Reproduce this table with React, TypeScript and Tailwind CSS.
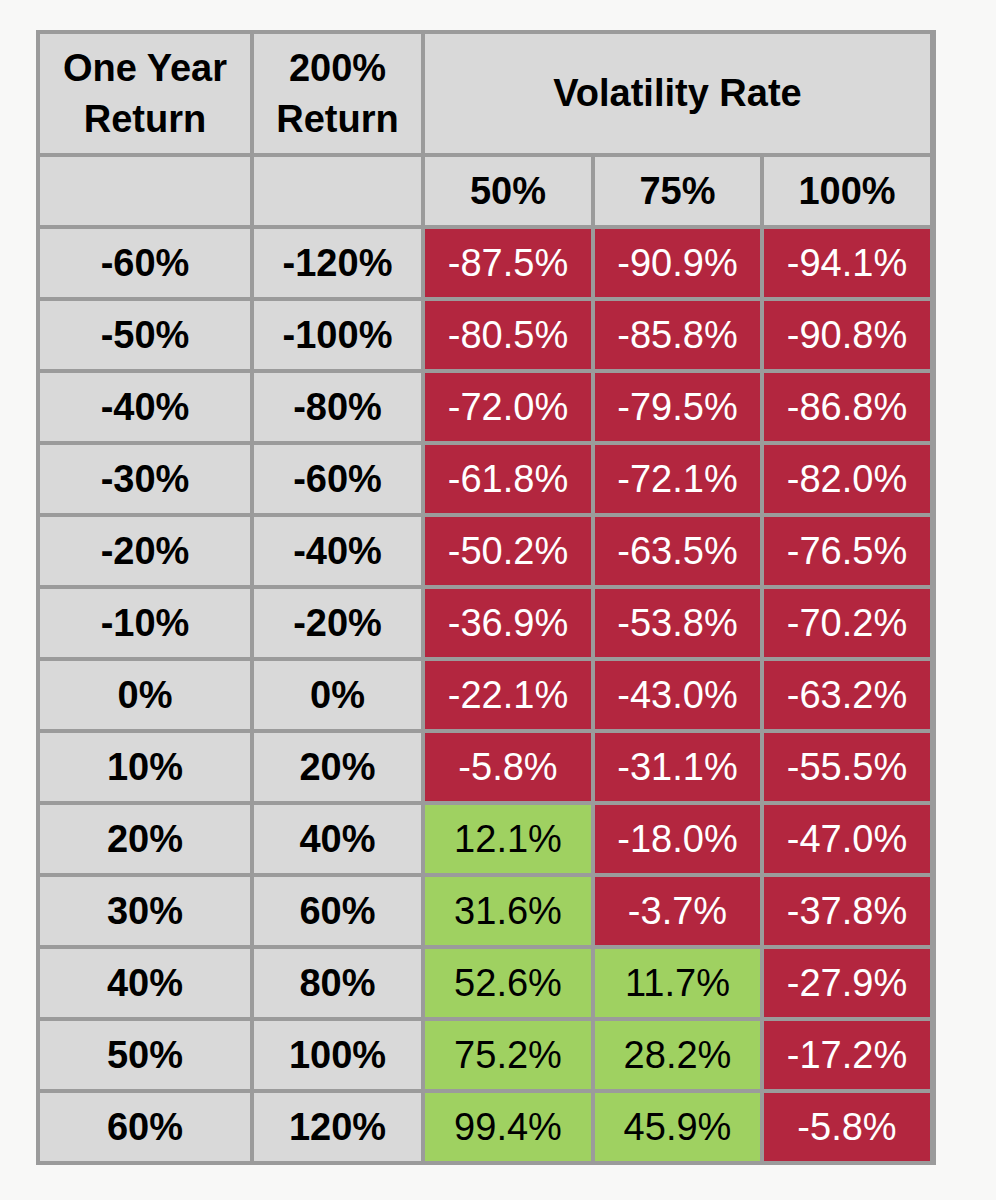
const rows: [string, string, number, number, number][] = [
    ['-60%', '-120%', -87.5, -90.9, -94.1],
    ['-50%', '-100%', -80.5, -85.8, -90.8],
    ['-40%', '-80%', -72.0, -79.5, -86.8],
    ['-30%', '-60%', -61.8, -72.1, -82.0],
    ['-20%', '-40%', -50.2, -63.5, -76.5],
    ['-10%', '-20%', -36.9, -53.8, -70.2],
    ['0%', '0%', -22.1, -43.0, -63.2],
    ['10%', '20%', -5.8, -31.1, -55.5],
    ['20%', '40%', 12.1, -18.0, -47.0],
    ['30%', '60%', 31.6, -3.7, -37.8],
    ['40%', '80%', 52.6, 11.7, -27.9],
    ['50%', '100%', 75.2, 28.2, -17.2],
    ['60%', '120%', 99.4, 45.9, -5.8],
];

function ValueCell({ value }: { value: number }) {
    const positive = value > 0;
    return (
        <div
            className={
                positive
                    ? 'flex h-[68px] items-center justify-center bg-[#9fd161] text-black'
                    : 'flex h-[68px] items-center justify-center bg-[#b3263f] text-white'
            }
        >
            {value.toFixed(1)}%
        </div>
    );
}

function LabelCell({ children }: { children?: React.ReactNode }) {
    return <div className="flex h-[68px] items-center justify-center bg-[#d9d9d9] font-bold text-black">{children}</div>;
}

export default function App() {
    return (
        <main
            className="min-h-screen bg-[#f8f8f7] pt-[30px] pl-[36px]"
            style={{ fontFamily: '"Liberation Sans", Arial, sans-serif' }}
        >
            <div className="grid w-[900px] grid-cols-[210px_167px_166px_165px_166px] gap-[4px] bg-[#9b9b9b] p-[4px] text-[38px] leading-[51px]">
                <div className="flex h-[119px] items-center justify-center bg-[#d9d9d9] text-center font-bold">
                    One Year
                    <br />
                    Return
                </div>
                <div className="flex h-[119px] items-center justify-center bg-[#d9d9d9] text-center font-bold">
                    200%
                    <br />
                    Return
                </div>
                <div className="col-span-3 flex h-[119px] items-center justify-center bg-[#d9d9d9] font-bold">Volatility Rate</div>

                <LabelCell />
                <LabelCell />
                <LabelCell>50%</LabelCell>
                <LabelCell>75%</LabelCell>
                <LabelCell>100%</LabelCell>

                {rows.map(([year, lev, a, b, c]) => (
                    <div key={year} className="contents">
                        <LabelCell>{year}</LabelCell>
                        <LabelCell>{lev}</LabelCell>
                        <ValueCell value={a} />
                        <ValueCell value={b} />
                        <ValueCell value={c} />
                    </div>
                ))}
            </div>
        </main>
    );
}
